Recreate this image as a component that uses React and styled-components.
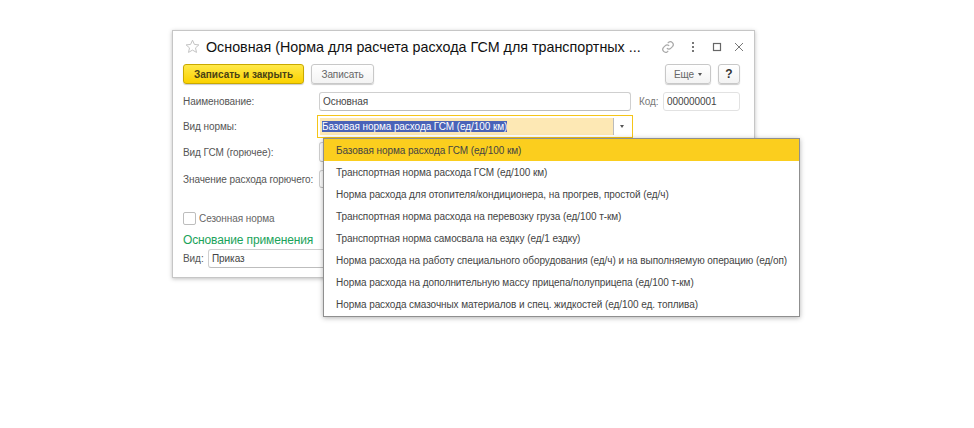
import React from "react";
import styled, { createGlobalStyle } from "styled-components";

const GlobalStyle = createGlobalStyle`
  html, body {
    margin: 0;
    background: #fff;
    font-family: "Liberation Sans", Arial, sans-serif;
  }
`;

const options = [
  "Базовая норма расхода ГСМ (ед/100 км)",
  "Транспортная норма расхода ГСМ (ед/100 км)",
  "Норма расхода для отопителя/кондиционера, на прогрев, простой (ед/ч)",
  "Транспортная норма расхода на перевозку груза (ед/100 т-км)",
  "Транспортная норма самосвала на ездку (ед/1 ездку)",
  "Норма расхода на работу специального оборудования (ед/ч) и на выполняемую операцию (ед/оп)",
  "Норма расхода на дополнительную массу прицепа/полуприцепа (ед/100 т-км)",
  "Норма расхода смазочных материалов и спец. жидкостей (ед/100 ед. топлива)",
];

const App = () => {
  return (
    <Page>
      <GlobalStyle />
      <Window>
        <TitleBar>
          <StarIcon width="15" height="15" viewBox="0 0 15 15">
            <path
              d="M7.5 1.2l1.9 4.2 4.5.5-3.4 3 1 4.5-4-2.3-4 2.3 1-4.5-3.4-3 4.5-.5z"
              fill="none"
              stroke="#c4c4c4"
            />
          </StarIcon>
          <Title>Основная (Норма для расчета расхода ГСМ для транспортных ...</Title>
          <TitleIcons>
            <svg width="14" height="14" viewBox="0 0 24 24" fill="none" stroke="#a8a8a8" strokeWidth="2">
              <path d="M10 14a5 5 0 0 0 7 0l3-3a5 5 0 0 0-7-7l-1.5 1.5" />
              <path d="M14 10a5 5 0 0 0-7 0l-3 3a5 5 0 0 0 7 7l1.5-1.5" />
            </svg>
            <svg width="10" height="14" viewBox="0 0 10 14" fill="#777">
              <rect x="4" y="2" width="2" height="2" />
              <rect x="4" y="6" width="2" height="2" />
              <rect x="4" y="10" width="2" height="2" />
            </svg>
            <svg width="12" height="14" viewBox="0 0 12 14" fill="none" stroke="#666" strokeWidth="1.2">
              <rect x="2.5" y="3.5" width="7" height="7" />
            </svg>
            <svg width="12" height="14" viewBox="0 0 12 14" fill="none" stroke="#777" strokeWidth="1">
              <path d="M2 3l8 8M10 3l-8 8" />
            </svg>
          </TitleIcons>
        </TitleBar>

        <Toolbar>
          <PrimaryButton>Записать и закрыть</PrimaryButton>
          <Button>Записать</Button>
          <ToolbarEnd>
            <Button $width={46}>
              Еще <Caret />
            </Button>
            <Button $width={22} $dark>
              ?
            </Button>
          </ToolbarEnd>
        </Toolbar>

        <NameRow>
          <Label>Наименование:</Label>
          <Input $width={312}>Основная</Input>
          <CodeLabel>Код:</CodeLabel>
          <CodeInput>000000001</CodeInput>
        </NameRow>

        <KindRow>
          <Label>Вид нормы:</Label>
          <FocusedSelect>
            <SelectValue>
              <Selected>Базовая норма расхода ГСМ (ед/100 км)</Selected>
            </SelectValue>
            <SelectArrow>
              <Caret />
            </SelectArrow>
          </FocusedSelect>
        </KindRow>

        <FuelRow>
          <Label>Вид ГСМ (горючее):</Label>
          <Input $width={100} />
        </FuelRow>

        <ValueRow>
          <Label>Значение расхода горючего:</Label>
          <Input $width={100} />
        </ValueRow>

        <CheckRow>
          <CheckBox />
          <CheckText>Сезонная норма</CheckText>
        </CheckRow>

        <SectionTitle>Основание применения</SectionTitle>

        <BasisRow>
          <BasisLabel>Вид:</BasisLabel>
          <Input $width={200}>Приказ</Input>
        </BasisRow>

        <Dropdown>
          {options.map((option, i) => (
            <Option key={option} $active={i === 0}>
              {option}
            </Option>
          ))}
        </Dropdown>
      </Window>
    </Page>
  );
};

export default App;

const Page = styled.div`
  width: 974px;
  height: 428px;
  padding: 30px 0 0 172px;
  box-sizing: border-box;
  overflow: hidden;
`;

const Window = styled.div`
  position: relative;
  width: 583px;
  height: 248px;
  box-sizing: border-box;
  padding: 0 10px;
  background: #fff;
  border: 1px solid #c6c6c6;
  box-shadow: 0 1px 4px rgba(0, 0, 0, 0.25);
  font-size: 10px;
  letter-spacing: -0.07px;
`;

const TitleBar = styled.div`
  display: flex;
  align-items: center;
  height: 31px;
  padding-left: 2px;
`;

const StarIcon = styled.svg`
  flex: none;
`;

const Title = styled.div`
  flex: 0 0 433px;
  margin-left: 6px;
  font-size: 14.3px;
  letter-spacing: 0;
  color: #111;
  white-space: nowrap;
`;

const TitleIcons = styled.div`
  flex: none;
  display: flex;
  align-items: center;
  gap: 13px;
  margin-left: 20px;

  svg {
    flex: none;
  }

  svg:last-child {
    margin-left: -3px;
  }
`;

const Toolbar = styled.div`
  display: flex;
  gap: 7px;
  height: 20px;
  margin-top: 2px;
`;

const ToolbarEnd = styled.div`
  display: flex;
  gap: 7px;
  margin-left: auto;
  margin-right: 4px;
`;

const PrimaryButton = styled.div`
  display: flex;
  align-items: center;
  justify-content: center;
  width: 121px;
  box-sizing: border-box;
  font-weight: 700;
  letter-spacing: 0;
  color: #4a4214;
  background: linear-gradient(#ffe94a, #fbd200);
  border: 1px solid #c9a900;
  border-radius: 3px;
  box-shadow: 0 1px 1px rgba(0, 0, 0, 0.2);
`;

const Button = styled.div`
  display: flex;
  align-items: center;
  justify-content: center;
  gap: 4px;
  width: ${(p) => (p.$width ? `${p.$width}px` : "63px")};
  box-sizing: border-box;
  font-size: ${(p) => (p.$dark ? "12px" : "10px")};
  font-weight: ${(p) => (p.$dark ? 700 : 400)};
  color: ${(p) => (p.$dark ? "#333" : "#666")};
  background: linear-gradient(#fff, #f3f3f3);
  border: 1px solid #c8c8c8;
  border-radius: 3px;
  box-shadow: 0 1px 1px rgba(0, 0, 0, 0.2);
`;

const Caret = styled.span`
  display: inline-block;
  width: 0;
  height: 0;
  border-left: 2.5px solid transparent;
  border-right: 2.5px solid transparent;
  border-top: 3px solid #555;
`;

const Row = styled.div`
  display: flex;
  align-items: center;
`;

const NameRow = styled(Row)`
  height: 19px;
  margin-top: 8px;
`;

const KindRow = styled(Row)`
  height: 23px;
  margin-top: 4px;
`;

const FuelRow = styled(Row)`
  height: 20px;
  margin-top: 4px;
`;

const ValueRow = styled(Row)`
  height: 18px;
  margin-top: 8px;
`;

const CheckRow = styled(Row)`
  height: 14px;
  margin-top: 23px;
`;

const BasisRow = styled(Row)`
  height: 19px;
  margin-top: 0;
`;

const Label = styled.div`
  flex: 0 0 136px;
  color: #555;
  white-space: nowrap;
`;

const Input = styled.div`
  display: flex;
  align-items: center;
  width: ${(p) => p.$width}px;
  height: 100%;
  box-sizing: border-box;
  padding-left: 3px;
  color: #444;
  background: #fff;
  border: 1px solid #cfcfcf;
  border-bottom-color: #bdbdbd;
  border-radius: 3px;
`;

const CodeLabel = styled.div`
  margin-left: 8px;
  width: 24px;
  color: #777;
`;

const CodeInput = styled(Input)`
  width: 77px;
  border-color: #e2e2e2;
`;

const FocusedSelect = styled.div`
  display: flex;
  width: 316px;
  height: 100%;
  margin-left: -2px;
  box-sizing: border-box;
  border: 1px solid #f5c518;
  background: #fff;
  padding: 2px;
`;

const SelectValue = styled.div`
  flex: 1;
  display: flex;
  align-items: center;
  padding-left: 2px;
  background: #fde8b4;
`;

const Selected = styled.span`
  color: #fff;
  background: #4a63b8;
  white-space: nowrap;
`;

const SelectArrow = styled.div`
  display: flex;
  align-items: center;
  justify-content: center;
  width: 16px;
  border-left: 1px solid #bbb;
`;

const CheckBox = styled.div`
  width: 11px;
  height: 11px;
  background: #fff;
  border: 1px solid #bdbdbd;
  border-radius: 2px;
`;

const CheckText = styled.div`
  margin-left: 3px;
  color: #666;
`;

const SectionTitle = styled.div`
  margin-top: 7px;
  height: 17px;
  line-height: 17px;
  font-size: 12px;
  letter-spacing: -0.13px;
  color: #1aa35a;
`;

const BasisLabel = styled.div`
  flex: 0 0 25px;
  color: #555;
`;

const Dropdown = styled.div`
  position: absolute;
  left: 150px;
  top: 107px;
  width: 477px;
  box-sizing: border-box;
  padding-bottom: 1px;
  background: #fff;
  border: 1px solid #8f8f8f;
  box-shadow: 0 1px 5px rgba(0, 0, 0, 0.3);
`;

const Option = styled.div`
  display: flex;
  align-items: center;
  height: 22px;
  padding-left: 12px;
  color: #444;
  white-space: nowrap;
  background: ${(p) => (p.$active ? "#fbce1e" : "transparent")};
`;
